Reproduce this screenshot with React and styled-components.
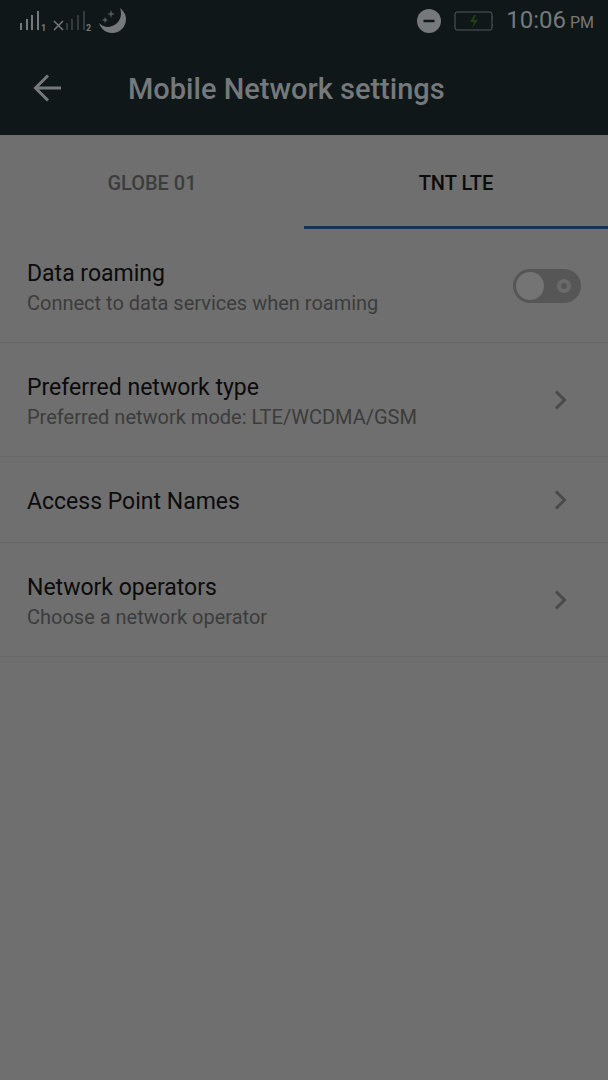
import React, { useState } from "react";
import styled, { createGlobalStyle } from "styled-components";

const colors = {
  bar: "#0f1719",
  barText: "#76797b",
  page: "#6f6f6f",
  text: "#0b0b0b",
  muted: "#3c3c3c",
  divider: "#686868",
  accent: "#1a3155",
  track: "#565656",
  knob: "#747474",
};

const GlobalStyle = createGlobalStyle`
  *, *::before, *::after {
    box-sizing: border-box;
  }
  body {
    margin: 0;
    background: ${colors.page};
    color: ${colors.text};
    font-family: Roboto, "Liberation Sans", sans-serif;
  }
`;

const Page = styled.div`
  min-height: 100vh;
  background: ${colors.page};
`;

const Header = styled.header`
  background: ${colors.bar};
  color: ${colors.barText};
`;

const StatusBar = styled.div`
  display: flex;
  align-items: center;
  justify-content: space-between;
  height: 42px;
  padding: 0 14px 0 18px;
`;

const StatusGroup = styled.div`
  display: flex;
  align-items: center;
  gap: ${(props) => props.$gap}px;
`;

const Clock = styled.time`
  font-size: 24px;
  line-height: 30px;
`;

const Meridiem = styled.span`
  font-size: 16px;
`;

const TitleBar = styled.div`
  display: flex;
  align-items: center;
  gap: 64px;
  height: 93px;
  padding: 0 32px;
`;

const BackButton = styled.button`
  display: flex;
  padding: 0;
  border: 0;
  background: none;
  color: inherit;
`;

const Title = styled.h1`
  margin: 0;
  font-size: 29px;
  line-height: 36px;
  font-weight: 500;
`;

const Tabs = styled.div`
  display: flex;
  height: 94px;
`;

const Tab = styled.button`
  flex: 1;
  padding: 4px 0 0;
  border: 0;
  border-bottom: 3px solid ${(props) => (props.$active ? colors.accent : "transparent")};
  background: none;
  color: ${(props) => (props.$active ? colors.text : colors.muted)};
  font-family: inherit;
  font-size: 20px;
  font-weight: 500;
`;

const List = styled.ul`
  margin: 0;
  padding: 0;
  list-style: none;
`;

const ListItem = styled.li`
  border-bottom: 1px solid ${colors.divider};
`;

const rowLayout = `
  display: flex;
  align-items: center;
  justify-content: space-between;
  width: 100%;
  padding: 25px 27px;
`;

const Row = styled.div`
  ${rowLayout}
`;

const LinkRow = styled.a`
  ${rowLayout}
  padding-right: 40px;
  color: inherit;
  text-decoration: none;
`;

const RowText = styled.span`
  display: flex;
  flex-direction: column;
  padding-top: 4px;
`;

const RowTitle = styled.span`
  font-size: 23px;
  line-height: 31px;
`;

const RowSubtitle = styled.span`
  color: ${colors.muted};
  font-size: 20px;
  line-height: 28px;
`;

const Switch = styled.span`
  position: relative;
  display: flex;
  align-items: center;
  justify-content: space-between;
  width: 68px;
  height: 34px;
  padding: 3px;
  border-radius: 17px;
  background: ${colors.track};
  flex-direction: ${(props) => (props.$on ? "row-reverse" : "row")};
`;

const SwitchInput = styled.input`
  position: absolute;
  inset: 0;
  width: 100%;
  height: 100%;
  margin: 0;
  opacity: 0;
`;

const Knob = styled.span`
  width: 28px;
  height: 28px;
  border-radius: 50%;
  background: ${colors.knob};
`;

const SwitchMark = styled.span`
  width: 14px;
  height: 14px;
  margin: 0 7px;
  border: 4px solid #6a6a6a;
  border-radius: 50%;
`;

const SignalOne = () => (
  <svg width="30" height="26" viewBox="0 0 30 26" aria-hidden="true">
    <g fill="currentColor">
      <rect x="2" y="15" width="2" height="7" />
      <rect x="8" y="11" width="2" height="11" />
      <rect x="13" y="7" width="2" height="15" />
      <rect x="19" y="3" width="2" height="19" />
    </g>
    <text x="23" y="23" fill="currentColor" fontSize="9" fontWeight="700">
      1
    </text>
  </svg>
);

const SignalTwo = () => (
  <svg width="40" height="26" viewBox="0 0 40 26" aria-hidden="true">
    <path d="M1 13l9 9M10 13l-9 9" stroke="currentColor" strokeWidth="1.5" />
    <g fill="#35393b">
      <rect x="13" y="15" width="2" height="7" />
      <rect x="18" y="11" width="2" height="11" />
      <rect x="24" y="7" width="2" height="15" />
      <rect x="30" y="3" width="2" height="19" />
    </g>
    <text x="33" y="23" fill="currentColor" fontSize="9" fontWeight="700">
      2
    </text>
  </svg>
);

const Moon = () => (
  <svg width="28" height="28" viewBox="0 0 28 28" fill="currentColor" aria-hidden="true">
    <path d="M22 1C26 4 28 8 28 12C28 20 22 26 14 26C8 26 3 22 1 16C5 20 10 21 14 19C21 17 25 9 22 1Z" />
    <path
      d="M13 3l1 3 3 1-3 1-1 3-1-3-3-1 3-1zM7 10l1 2 2 1-2 1-1 2-1-2-2-1 2-1z"
      opacity="0.65"
    />
  </svg>
);

const DoNotDisturb = () => (
  <svg width="25" height="25" viewBox="0 0 25 25" aria-hidden="true">
    <circle cx="12" cy="12" r="12" fill="currentColor" />
    <path d="M6.5 12h11" stroke={colors.bar} strokeWidth="2.5" />
  </svg>
);

const Battery = () => (
  <svg width="40" height="20" viewBox="0 0 40 20" aria-hidden="true">
    <path
      d="M3 1h33q2 0 2 2v3h1M39 14h-1v3q0 2-2 2H3q-2 0-2-2V3q0-2 2-2M38 6v8"
      fill="none"
      stroke="#555b5c"
    />
    <path d="M20 4l-4 7h4l-2 6 6-8h-4l2-5z" fill="#203f16" />
  </svg>
);

const BackArrow = () => (
  <svg width="32" height="30" viewBox="0 0 32 30" fill="none" aria-hidden="true">
    <path d="M29 14H4M16 1.5L3.5 14L16 26.5" stroke="currentColor" strokeWidth="3" />
  </svg>
);

const Chevron = () => (
  <svg width="14" height="20" viewBox="0 0 14 20" fill="none" aria-hidden="true">
    <path d="M2 1.5L10.5 10L2 18.5" stroke="#4a4a4a" strokeWidth="3" />
  </svg>
);

const tabs = ["GLOBE 01", "TNT LTE"];

const links = [
  { title: "Preferred network type", subtitle: "Preferred network mode: LTE/WCDMA/GSM" },
  { title: "Access Point Names" },
  { title: "Network operators", subtitle: "Choose a network operator" },
];

const App = () => {
  const [activeTab, setActiveTab] = useState(1);
  const [roaming, setRoaming] = useState(false);

  return (
    <Page>
      <GlobalStyle />
      <Header>
        <StatusBar>
          <StatusGroup $gap={5}>
            <SignalOne />
            <SignalTwo />
            <Moon />
          </StatusGroup>
          <StatusGroup $gap={12}>
            <DoNotDisturb />
            <Battery />
            <Clock>
              10:06<Meridiem> PM</Meridiem>
            </Clock>
          </StatusGroup>
        </StatusBar>
        <TitleBar>
          <BackButton type="button" aria-label="Back">
            <BackArrow />
          </BackButton>
          <Title>Mobile Network settings</Title>
        </TitleBar>
      </Header>
      <Tabs role="tablist">
        {tabs.map((tab, idx) => (
          <Tab
            key={tab}
            type="button"
            role="tab"
            aria-selected={idx === activeTab}
            $active={idx === activeTab}
            onClick={() => setActiveTab(idx)}
          >
            {tab}
          </Tab>
        ))}
      </Tabs>
      <List>
        <ListItem>
          <Row>
            <RowText as="label" htmlFor="roaming">
              <RowTitle>Data roaming</RowTitle>
              <RowSubtitle>Connect to data services when roaming</RowSubtitle>
            </RowText>
            <Switch $on={roaming}>
              <Knob />
              <SwitchMark />
              <SwitchInput
                id="roaming"
                type="checkbox"
                checked={roaming}
                onChange={() => setRoaming(!roaming)}
              />
            </Switch>
          </Row>
        </ListItem>
        {links.map((link) => (
          <ListItem key={link.title}>
            <LinkRow href="#">
              <RowText>
                <RowTitle>{link.title}</RowTitle>
                {link.subtitle && <RowSubtitle>{link.subtitle}</RowSubtitle>}
              </RowText>
              <Chevron />
            </LinkRow>
          </ListItem>
        ))}
      </List>
    </Page>
  );
};

export default App;
